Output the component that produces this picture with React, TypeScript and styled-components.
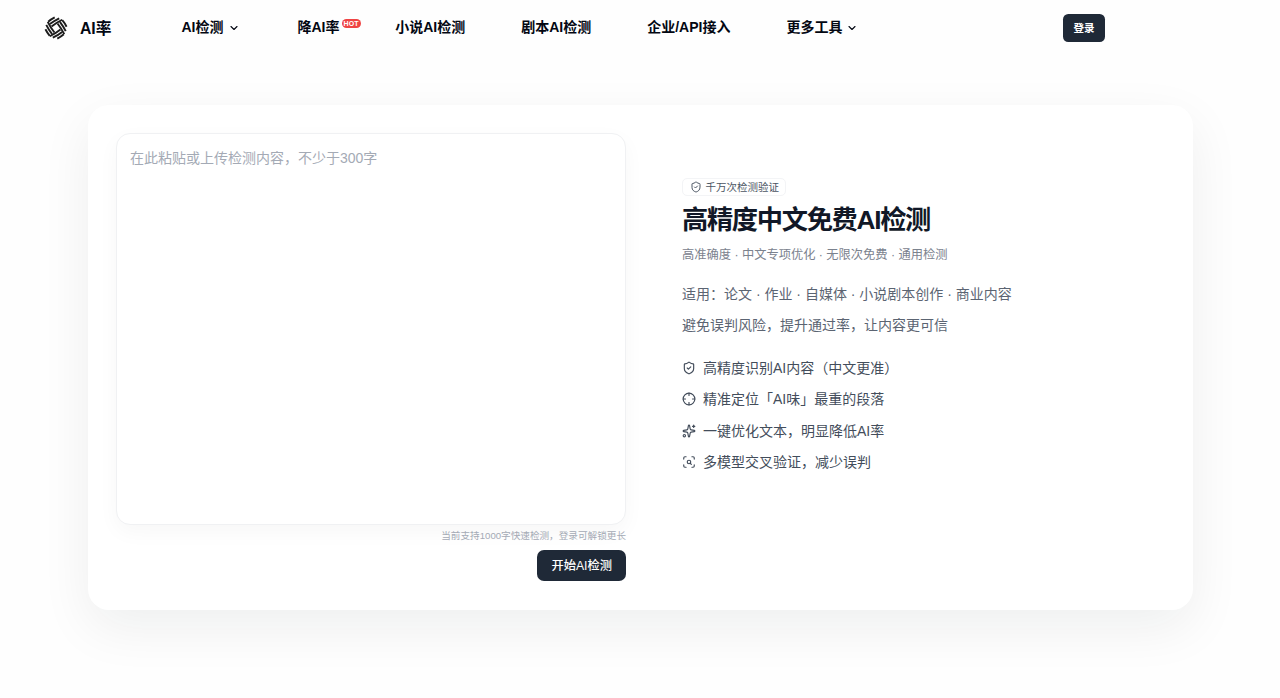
import React from 'react';
import styled, { createGlobalStyle } from 'styled-components';
import { ChevronDown, Crosshair, ScanSearch, ShieldCheck, Sparkles } from 'lucide-react';

const GlobalStyle = createGlobalStyle`
  *, *::before, *::after { box-sizing: border-box; }
  body {
    margin: 0;
    background: #fefefe;
    color: #030712;
    font-family: "Liberation Sans", "Noto Sans CJK SC", sans-serif;
    font-size: 14px;
    line-height: 21px;
  }
  button, textarea { font-family: inherit; }
`;

const Page = styled.div`
  min-height: 100vh;
  overflow: hidden;
`;

const Header = styled.header`
  display: flex;
  align-items: center;
  height: 56px;
  padding: 0 175px 0 44px;
`;

const Brand = styled.a`
  display: flex;
  align-items: center;
  gap: 12px;
  width: 137.5px;
  font-size: 15.75px;
  font-weight: 700;
`;

const Nav = styled.nav`
  display: flex;
  align-items: center;
  flex: 1;
  padding-bottom: 1px;
`;

const NavItem = styled.a<{ $gap?: number }>`
  display: flex;
  align-items: center;
  margin-right: ${({ $gap = 56 }) => $gap}px;
  font-weight: 600;
  white-space: nowrap;

  svg { margin-left: 4px; }
`;

const HotTag = styled.span`
  align-self: flex-start;
  margin: 2px 0 0 2px;
  padding: 0 2px;
  border-radius: 5px;
  background: #ef4444;
  color: #fff;
  font-size: 7px;
  font-weight: 700;
  line-height: 9px;
  letter-spacing: 0.1px;
`;

const Button = styled.button<{ $large?: boolean }>`
  height: ${({ $large }) => ($large ? 31.5 : 28)}px;
  padding: 0 ${({ $large }) => ($large ? 14 : 10.5)}px ${({ $large }) => ($large ? 1 : 2)}px;
  border: 0;
  border-radius: ${({ $large }) => ($large ? 7 : 5.25)}px;
  background: #1f2937;
  color: #fff;
  font-size: ${({ $large }) => ($large ? 12.25 : 10.5)}px;
  font-weight: ${({ $large }) => ($large ? 500 : 600)};
  white-space: nowrap;
`;

const Card = styled.main`
  display: grid;
  grid-template-columns: 510.5px 1fr;
  gap: 56px;
  width: 1105.5px;
  height: 505px;
  margin: 49px 0 0 87.5px;
  padding: 28px;
  border-radius: 21px;
  background: #fff;
  box-shadow: 0 17.5px 52.5px rgba(15, 30, 30, 0.065);
`;

const Editor = styled.section`
  display: flex;
  flex-direction: column;
  align-items: flex-end;
`;

const TextArea = styled.textarea`
  display: block;
  width: 100%;
  height: 392px;
  padding: 13.5px 13.5px;
  border: 1px solid #f0f1f3;
  border-radius: 14px;
  outline: 0;
  resize: none;
  background: #fff;
  box-shadow: 0 7px 21px rgba(15, 23, 42, 0.035);
  font-size: 14px;
  line-height: 21px;

  &::placeholder { color: #a4aab5; }
`;

const Hint = styled.p`
  margin: 3.5px 0 7px;
  color: #a4aab5;
  font-size: 9.625px;
  line-height: 14px;
`;

const Intro = styled.section`
  display: flex;
  flex-direction: column;
  align-items: flex-start;
  padding-top: 45px;
`;

const Badge = styled.span`
  display: flex;
  align-items: center;
  gap: 4px;
  height: 18px;
  padding: 0 6px 0 6.5px;
  border: 1px solid #f3f4f6;
  border-radius: 5px;
  color: #4b5563;
  font-size: 10.5px;
  line-height: 14px;
`;

const Title = styled.h1`
  margin: 6.5px 0 0;
  color: #111827;
  font-size: 26.25px;
  font-weight: 700;
  line-height: 35px;
  letter-spacing: -0.05em;
`;

const Subtitle = styled.p`
  margin: 9.5px 0 0;
  color: #7b828e;
  font-size: 12.25px;
  line-height: 17.5px;
`;

const Description = styled.p`
  margin: 14px 0 0;
  color: #5b6472;
  line-height: 31.5px;
`;

const Features = styled.ul`
  display: grid;
  gap: 7px;
  margin: 14px 0 0;
  padding: 0;
  color: #434d5b;
  line-height: 24.5px;
  list-style: none;
`;

const Feature = styled.li`
  display: flex;
  align-items: center;
  gap: 7px;
`;

const features = [
  { Icon: ShieldCheck, text: '高精度识别AI内容（中文更准）' },
  { Icon: Crosshair, text: '精准定位「AI味」最重的段落' },
  { Icon: Sparkles, text: '一键优化文本，明显降低AI率' },
  { Icon: ScanSearch, text: '多模型交叉验证，减少误判' },
];

const Logo = () => (
  <svg width="24" height="24" viewBox="-12 -12 24 24" fill="none" stroke="#1c1c1c" strokeWidth="1.9">
    {[-35, 55, 145, 235].map((angle) => (
      <g key={angle} transform={`rotate(${angle})`}>
        <path d="M-2.8-3.8Q4-4.2 9.8-3.2" />
        <path d="M-2.8-6.7Q3-7 8.2-6.1" />
        <path d="M-2.8-9.6Q1-10 5-9.4" />
      </g>
    ))}
  </svg>
);

export default function App() {
  return (
    <Page>
      <GlobalStyle />
      <Header>
        <Brand><Logo />AI率</Brand>
        <Nav>
          <NavItem $gap={58}>AI检测<ChevronDown size={12} strokeWidth={2.2} /></NavItem>
          <NavItem $gap={34.6}>降AI率<HotTag>HOT</HotTag></NavItem>
          <NavItem>小说AI检测</NavItem>
          <NavItem>剧本AI检测</NavItem>
          <NavItem>企业/API接入</NavItem>
          <NavItem $gap={0}>更多工具<ChevronDown size={12} strokeWidth={2.2} /></NavItem>
        </Nav>
        <Button>登录</Button>
      </Header>
      <Card>
        <Editor>
          <TextArea placeholder="在此粘贴或上传检测内容，不少于300字" />
          <Hint>当前支持1000字快速检测，登录可解锁更长</Hint>
          <Button $large>开始AI检测</Button>
        </Editor>
        <Intro>
          <Badge><ShieldCheck size={12} />千万次检测验证</Badge>
          <Title>高精度中文免费AI检测</Title>
          <Subtitle>高准确度 · 中文专项优化 · 无限次免费 · 通用检测</Subtitle>
          <Description>
            适用：论文 · 作业 · 自媒体 · 小说剧本创作 · 商业内容<br />
            避免误判风险，提升通过率，让内容更可信
          </Description>
          <Features>
            {features.map(({ Icon, text }) => (
              <Feature key={text}><Icon size={14} />{text}</Feature>
            ))}
          </Features>
        </Intro>
      </Card>
    </Page>
  );
}
